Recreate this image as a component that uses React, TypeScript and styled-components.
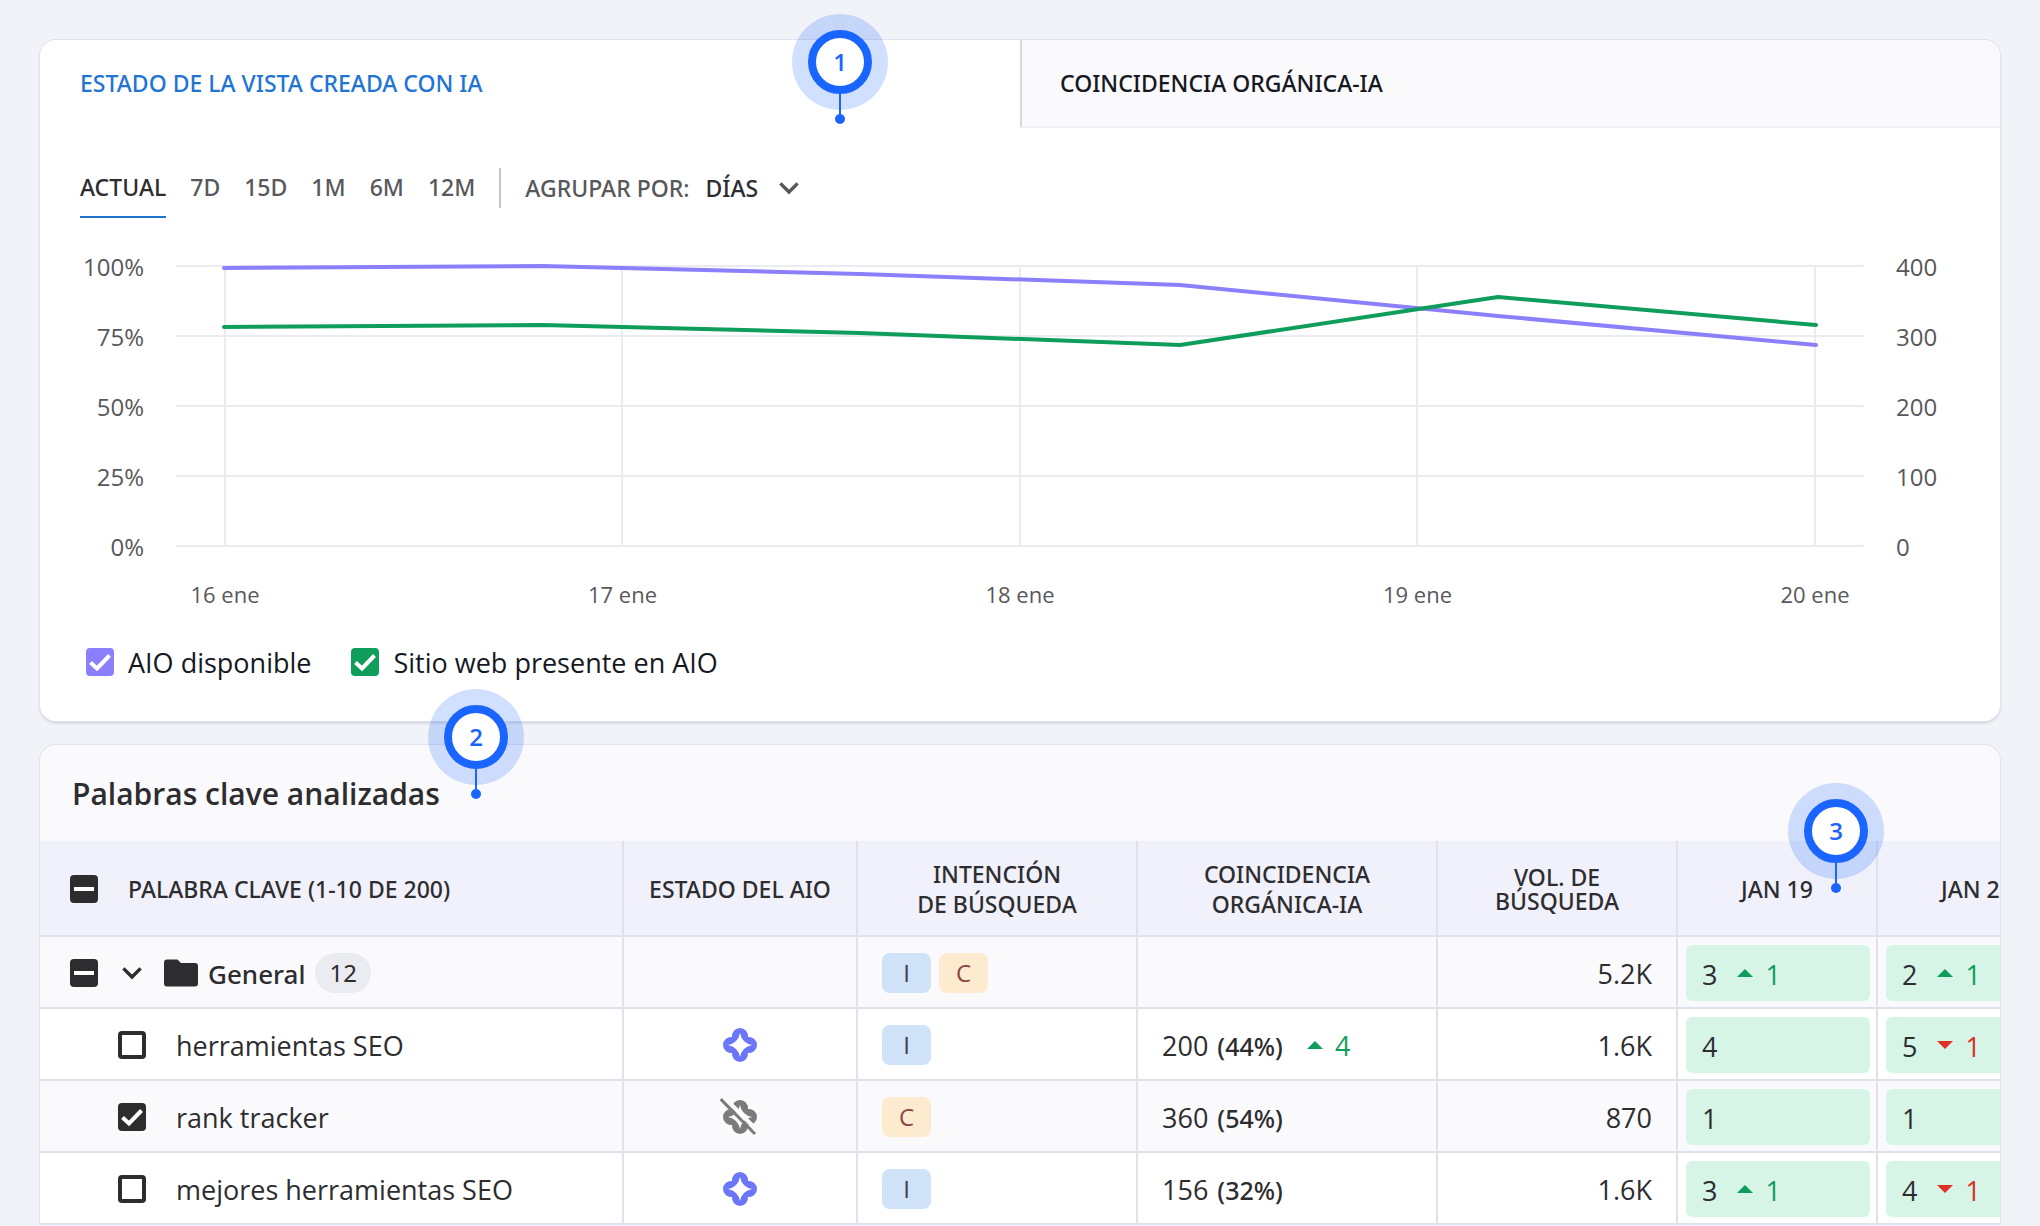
import React from 'react';
import styled, { createGlobalStyle, css } from 'styled-components';

const GlobalStyle = createGlobalStyle`
  *, *::before, *::after { box-sizing: border-box; }
  body {
    margin: 0;
    background: #f1f3f8;
    color: #2d2d30;
    font-family: "Open Sans", "Noto Sans", sans-serif;
    font-size: 27px;
    line-height: 36px;
  }
  button, input, select { font: inherit; color: inherit; }
`;

const medium = '"Noto Sans", "Open Sans", sans-serif';
const blue = '#1a64ff';
const green = '#0f9d5b';
const purple = '#8b7ffb';
const red = '#df3024';
const line = '#dfe1ec';
const grid = '#ebebf2';

const Page = styled.main`
  display: flex;
  flex-direction: column;
  gap: 24px;
  padding: 40px 40px 0;
`;

const Card = styled.section`
  position: relative;
  background: #fff;
  border-radius: 16px;
  box-shadow: 0 0 0 1px #e2e3ea, 0 2px 3px rgba(40, 44, 80, 0.2);
`;

const TableCard = styled(Card)`
  border-radius: 16px 16px 0 0;
  box-shadow: 0 0 0 1px #e2e3ea;
`;

const Tabs = styled.div`
  display: grid;
  grid-template-columns: 1fr 1fr;
`;

const Tab = styled.button<{ $active?: boolean }>`
  height: 88px;
  padding: 0 40px;
  border: 0;
  border-bottom: 2px solid transparent;
  background: #fff;
  color: #1f74d4;
  font-family: ${medium};
  font-size: 23px;
  font-weight: 500;
  text-align: left;
  border-radius: 16px 0 0 0;
  ${({ $active }) => !$active && css`
    padding-left: 38px;
    background: #fafafc;
    color: #16181f;
    border-left: 2px solid #d5d7df;
    border-bottom: 2px solid #f1f1f9;
    border-radius: 0 16px 0 0;
  `}
`;

const Toolbar = styled.div`
  display: flex;
  align-items: center;
  gap: 24px;
  height: 120px;
  padding: 0 40px;
  color: #58585b;
  font-family: ${medium};
  font-size: 23px;
  font-weight: 500;
`;

const Periods = styled.div`
  display: flex;
  gap: 24px;
`;

const Period = styled.button<{ $active?: boolean }>`
  height: 60px;
  padding: 0;
  border: 0;
  border-bottom: 2px solid ${({ $active }) => ($active ? '#1f74d4' : 'transparent')};
  background: none;
  color: ${({ $active }) => ($active ? '#2d2d30' : 'inherit')};
`;

const Divider = styled.span`
  width: 2px;
  height: 40px;
  background: #c3c3c6;
`;

const Grouping = styled.label`
  display: flex;
  align-items: center;
  gap: 16px;
`;

const SelectBox = styled.span`
  display: grid;
  align-items: center;
  color: #2d2d30;
  > * { grid-area: 1 / 1; }
  > svg { justify-self: end; pointer-events: none; color: #58585b; }
`;

const Select = styled.select`
  appearance: none;
  border: 0;
  padding: 0 40px 0 0;
  background: none;
`;

const ChartArea = styled.div`
  display: grid;
  grid-template-columns: 104px 1fr 104px;
  column-gap: 32px;
  margin-top: 3px;
  color: #58585b;
`;

const Axis = styled.div<{ $right?: boolean }>`
  display: flex;
  flex-direction: column;
  justify-content: space-between;
  height: 312px;
  font-size: 24px;
  line-height: 32px;
  text-align: ${({ $right }) => ($right ? 'left' : 'right')};
`;

const Plot = styled.div`
  padding-top: 14px;
`;

const PlotSvg = styled.svg`
  display: block;
  width: 100%;
  height: 282px;
  overflow: visible;
`;

const Days = styled.div`
  display: flex;
  justify-content: space-between;
  margin-top: 31px;
  font-size: 22px;
  line-height: 32px;
`;

const Day = styled.span`
  display: flex;
  justify-content: center;
  width: 98px;
`;

const Legend = styled.div`
  display: flex;
  gap: 40px;
  padding: 33px 46px 40px;
  color: #16181f;
`;

const LegendItem = styled.label`
  display: flex;
  align-items: center;
  gap: 14px;
`;

const Check = styled.span<{ $color: string }>`
  display: grid;
  flex: none;
  width: 28px;
  height: 28px;
  > * { grid-area: 1 / 1; }
  input {
    appearance: none;
    width: 28px;
    height: 28px;
    margin: 0;
    border: 4px solid ${({ $color }) => $color};
    border-radius: 4px;
    background: #fff;
  }
  input:checked, input:indeterminate { background: ${({ $color }) => $color}; }
  svg { pointer-events: none; }
`;

const TitleBar = styled.header`
  display: flex;
  align-items: center;
  height: 96px;
  padding: 2px 32px 0;
  background: #fafafc;
  border-radius: 16px 16px 0 0;
`;

const Title = styled.h2`
  margin: 0;
  font-size: 30px;
  line-height: 40px;
  font-weight: 600;
`;

const TableScroll = styled.div`
  overflow-x: auto;
  scrollbar-width: none;
`;

const Table = styled.table`
  width: 100%;
  min-width: 2038px;
  table-layout: fixed;
  border-collapse: separate;
  border-spacing: 0;
  tbody tr:nth-child(odd) { background: #fafafc; }
`;

const Col = styled.col<{ $w?: number }>`
  width: ${({ $w }) => ($w ? `${$w}px` : 'auto')};
`;

const Head = styled.th<{ $tight?: boolean; $first?: boolean }>`
  height: 96px;
  padding: 2px ${({ $first }) => ($first ? 30 : 0)}px 0;
  background: #f1f1fb;
  border-right: 2px solid ${line};
  border-bottom: 2px solid ${line};
  font-family: ${medium};
  font-size: 23px;
  line-height: ${({ $tight }) => ($tight ? 24 : 30)}px;
  font-weight: 500;
  text-align: center;
`;

const Cell = styled.td<{ $align?: string; $pad?: string }>`
  height: 72px;
  padding: ${({ $pad }) => $pad ?? '2px 24px 0'};
  border-right: 2px solid ${line};
  border-bottom: 2px solid ${line};
  text-align: ${({ $align }) => $align ?? 'left'};
`;

const Text = styled.span`
  display: block;
  padding-top: 2px;
`;

const NameLabel = styled.label<{ $nested?: boolean }>`
  display: flex;
  align-items: center;
  gap: 30px;
  padding-left: ${({ $nested }) => ($nested ? 48 : 0)}px;
`;

const Group = styled.div`
  display: flex;
  align-items: center;
  gap: 22px;
`;

const GroupToggle = styled.button`
  display: flex;
  padding: 0 0 0 2px;
  border: 0;
  background: none;
`;

const GroupName = styled.span`
  display: flex;
  align-items: center;
  gap: 10px;
  font-family: ${medium};
  font-size: 26px;
  font-weight: 500;
`;

const Count = styled.span`
  padding: 0 14px;
  border-radius: 20px;
  background: #ebecf1;
  font-size: 24px;
  line-height: 40px;
  font-weight: 400;
`;

const Tags = styled.div`
  display: flex;
  gap: 8px;
`;

const Tag = styled.span<{ $kind: string }>`
  width: 49px;
  border-radius: 8px;
  background: ${({ $kind }) => ($kind === 'I' ? '#d0e2f8' : '#fdebd0')};
  color: ${({ $kind }) => ($kind === 'I' ? '#3a4056' : '#8c4543')};
  font-family: "Open Sans", sans-serif;
  font-size: 24px;
  line-height: 40px;
  text-align: center;
`;

const Match = styled.div`
  display: flex;
  align-items: center;
  gap: 24px;
  padding-top: 2px;
`;

const Share = styled.span`
  padding-left: 2px;
  font-family: ${medium};
  font-size: 25px;
  font-weight: 500;
`;

const Delta = styled.span<{ $up: boolean }>`
  display: flex;
  align-items: center;
  gap: 12px;
  color: ${({ $up }) => ($up ? green : red)};
  svg { margin-bottom: 3px; }
`;

const Rank = styled.div`
  display: flex;
  align-items: center;
  gap: 20px;
  height: 56px;
  padding: 3px 16px 0;
  border-radius: 6px;
  background: #d6f5e6;
`;

const Pin = styled.div<{ $top: number; $left?: string; $right?: string }>`
  position: absolute;
  top: ${({ $top }) => $top}px;
  left: ${({ $left }) => $left ?? 'auto'};
  right: ${({ $right }) => $right ?? 'auto'};
  display: flex;
  flex-direction: column;
  align-items: center;
  width: 96px;
  height: 112px;
  padding-top: 16px;
  &::before {
    content: "";
    position: absolute;
    inset: 0 0 auto;
    height: 96px;
    border-radius: 50%;
    background: rgba(26, 100, 255, 0.2);
  }
`;

const PinDisc = styled.span`
  position: relative;
  width: 64px;
  height: 64px;
  border: 8px solid ${blue};
  border-radius: 50%;
  background: #fff;
  color: ${blue};
  font-size: 24px;
  line-height: 48px;
  font-weight: 600;
  text-align: center;
`;

const PinStem = styled.span`
  position: relative;
  width: 2px;
  height: 20px;
  background: ${blue};
`;

const PinDot = styled.span`
  flex: none;
  width: 10px;
  height: 10px;
  border-radius: 50%;
  background: ${blue};
`;

function Marker({ n, top, left, right }: { n: number; top: number; left?: string; right?: string }) {
  return (
    <Pin $top={top} $left={left} $right={right}>
      <PinDisc>{n}</PinDisc>
      <PinStem />
      <PinDot />
    </Pin>
  );
}

type State = 'on' | 'off' | 'mixed';

function Checkbox({ state, color = '#2d2d30', label }: { state: State; color?: string; label?: string }) {
  return (
    <Check $color={color}>
      <input
        type="checkbox"
        defaultChecked={state === 'on'}
        aria-label={label}
        ref={(el) => { if (el) el.indeterminate = state === 'mixed'; }}
      />
      {state === 'on' && (
        <svg width="28" height="28" viewBox="0 0 28 28" fill="none" stroke="#fff" strokeWidth="4">
          <path d="M4.5 14.5 11 20.5 23.5 7.5" />
        </svg>
      )}
      {state === 'mixed' && (
        <svg width="28" height="28" viewBox="0 0 28 28"><path fill="#fff" d="M4 12h20v4H4z" /></svg>
      )}
    </Check>
  );
}

function Chevron() {
  return (
    <svg width="20" height="20" viewBox="0 0 20 20" fill="none" stroke="currentColor" strokeWidth="3.4">
      <path d="M1.400 5.400 10 14l8.600-8.600" />
    </svg>
  );
}

function Folder() {
  return (
    <svg width="34" height="28" viewBox="0 0 34 28" fill="#2d2d30">
      <path d="M3 .5h10.500l3.500 3.500H31a3 3 0 0 1 3 3v17.500a3 3 0 0 1-3 3H3a3 3 0 0 1-3-3V3.500a3 3 0 0 1 3-3z" />
    </svg>
  );
}

const clover = 'M9.070 9.070A8 8 0 1 1 24.930 9.070A8 8 0 1 1 24.930 24.930A8 8 0 1 1 9.070 24.930A8 8 0 1 1 9.070 9.070z';
const star = 'M17 5Q19 15 29 17Q19 19 17 29Q15 19 5 17Q15 15 17 5z';

const AioSvg = styled.svg`
  display: block;
  margin: 0 auto;
  overflow: visible;
`;

function Aio({ active }: { active: boolean }) {
  return (
    <AioSvg width="34" height="34" viewBox="0 0 34 34" role="img" aria-label="AIO">
      <path fill={active ? '#6b77f8' : '#7b7b7d'} fillRule="evenodd" d={clover + star} />
      {!active && (
        <>
          <path stroke="#fafafc" strokeWidth="4" d="M1-2.500 35.500 31.500" />
          <path stroke="#7b7b7d" strokeWidth="3" d="M-2.300-.9 32 34" />
        </>
      )}
    </AioSvg>
  );
}

function Change({ value }: { value: number }) {
  const up = value > 0;
  return (
    <Delta $up={up}>
      <svg width="16" height="8" viewBox="0 0 16 8" fill="currentColor">
        <path d={up ? 'M0 8 8 0l8 8z' : 'M0 0h16L8 8z'} />
      </svg>
      {Math.abs(value)}
    </Delta>
  );
}

const aioSeries = [[48, 3], [366, 1], [684, 9], [1004, 20], [1322, 51], [1640, 80]];
const siteSeries = [[48, 62], [366, 60], [684, 68], [1004, 80], [1322, 32], [1640, 60]];
const toPoints = (s: number[][]) => s.map((p) => p.join(',')).join(' ');

function Chart() {
  return (
    <ChartArea>
      <Axis>
        {['100%', '75%', '50%', '25%', '0%'].map((t) => <span key={t}>{t}</span>)}
      </Axis>
      <Plot>
        <PlotSvg viewBox="0 0 1688 282" preserveAspectRatio="none" fill="none">
          <g stroke={grid} strokeWidth="2">
            {[1, 71, 141, 211, 281].map((y) => <path key={y} d={`M0 ${y}H1688`} />)}
            {[49, 446, 844, 1241, 1639].map((x) => <path key={x} d={`M${x} 0V281`} />)}
          </g>
          <g strokeWidth="4" strokeLinejoin="round" strokeLinecap="round">
            <polyline stroke={purple} points={toPoints(aioSeries)} />
            <polyline stroke={green} points={toPoints(siteSeries)} />
          </g>
        </PlotSvg>
        <Days>
          {[16, 17, 18, 19, 20].map((d) => <Day key={d}>{d} ene</Day>)}
        </Days>
      </Plot>
      <Axis $right>
        {[400, 300, 200, 100, 0].map((t) => <span key={t}>{t}</span>)}
      </Axis>
    </ChartArea>
  );
}

type RankValue = [number, number?];
interface Row {
  name: string;
  state: State;
  count?: number;
  aio?: boolean;
  intents: string[];
  match?: [number, string, number?];
  volume: string;
  ranks: RankValue[];
}

const rows: Row[] = [
  { name: 'General', state: 'mixed', count: 12, intents: ['I', 'C'], volume: '5.2K', ranks: [[3, 1], [2, 1]] },
  { name: 'herramientas SEO', state: 'off', aio: true, intents: ['I'], match: [200, '44%', 4], volume: '1.6K', ranks: [[4], [5, -1]] },
  { name: 'rank tracker', state: 'on', aio: false, intents: ['C'], match: [360, '54%'], volume: '870', ranks: [[1], [1]] },
  { name: 'mejores herramientas SEO', state: 'off', aio: true, intents: ['I'], match: [156, '32%'], volume: '1.6K', ranks: [[3, 1], [4, -1]] },
];

function KeywordRow({ row }: { row: Row }) {
  return (
    <tr>
      <Cell $pad="2px 30px 0">
        {row.count ? (
          <Group>
            <Checkbox state={row.state} label={row.name} />
            <GroupToggle aria-label={row.name}><Chevron /></GroupToggle>
            <GroupName><Folder /><Text>{row.name}</Text><Count>{row.count}</Count></GroupName>
          </Group>
        ) : (
          <NameLabel $nested><Checkbox state={row.state} /><Text>{row.name}</Text></NameLabel>
        )}
      </Cell>
      <Cell>{row.aio !== undefined && <Aio active={row.aio} />}</Cell>
      <Cell><Tags>{row.intents.map((k) => <Tag key={k} $kind={k}>{k}</Tag>)}</Tags></Cell>
      <Cell>
        {row.match && (
          <Match>
            <span>{row.match[0]} <Share>({row.match[1]})</Share></span>
            {row.match[2] && <Change value={row.match[2]} />}
          </Match>
        )}
      </Cell>
      <Cell $align="right"><Text>{row.volume}</Text></Cell>
      {row.ranks.map(([pos, change], i) => (
        <Cell key={i} $pad="8px 6px 6px 8px">
          <Rank>{pos}{change && <Change value={change} />}</Rank>
        </Cell>
      ))}
    </tr>
  );
}

export default function App() {
  return (
    <>
      <GlobalStyle />
      <Page>
        <Card>
          <Tabs role="tablist">
            <Tab role="tab" aria-selected $active>ESTADO DE LA VISTA CREADA CON IA</Tab>
            <Tab role="tab" aria-selected={false}>COINCIDENCIA ORGÁNICA-IA</Tab>
          </Tabs>
          <Toolbar>
            <Periods>
              {['ACTUAL', '7D', '15D', '1M', '6M', '12M'].map((p, i) => (
                <Period key={p} $active={i === 0}>{p}</Period>
              ))}
            </Periods>
            <Divider />
            <Grouping>
              AGRUPAR POR:
              <SelectBox>
                <Select><option>DÍAS</option></Select>
                <Chevron />
              </SelectBox>
            </Grouping>
          </Toolbar>
          <Chart />
          <Legend>
            <LegendItem><Checkbox state="on" color={purple} /><Text>AIO disponible</Text></LegendItem>
            <LegendItem><Checkbox state="on" color={green} /><Text>Sitio web presente en AIO</Text></LegendItem>
          </Legend>
          <Marker n={1} top={-26} right="calc(50% + 132px)" />
        </Card>
        <TableCard>
          <TitleBar><Title>Palabras clave analizadas</Title></TitleBar>
          <TableScroll>
            <Table>
              <colgroup>
                <Col /><Col $w={234} /><Col $w={280} /><Col $w={300} /><Col $w={240} /><Col $w={200} /><Col $w={200} />
              </colgroup>
              <thead>
                <tr>
                  <Head $first>
                    <NameLabel><Checkbox state="mixed" />PALABRA CLAVE (1-10 DE 200)</NameLabel>
                  </Head>
                  <Head>ESTADO DEL AIO</Head>
                  <Head>INTENCIÓN<br />DE BÚSQUEDA</Head>
                  <Head>COINCIDENCIA<br />ORGÁNICA-IA</Head>
                  <Head $tight>VOL. DE<br />BÚSQUEDA</Head>
                  <Head>JAN 19</Head>
                  <Head>JAN 20</Head>
                </tr>
              </thead>
              <tbody>
                {rows.map((row) => <KeywordRow key={row.name} row={row} />)}
              </tbody>
            </Table>
          </TableScroll>
          <Marker n={2} top={-56} left="388px" />
          <Marker n={3} top={38} right="116px" />
        </TableCard>
      </Page>
    </>
  );
}
